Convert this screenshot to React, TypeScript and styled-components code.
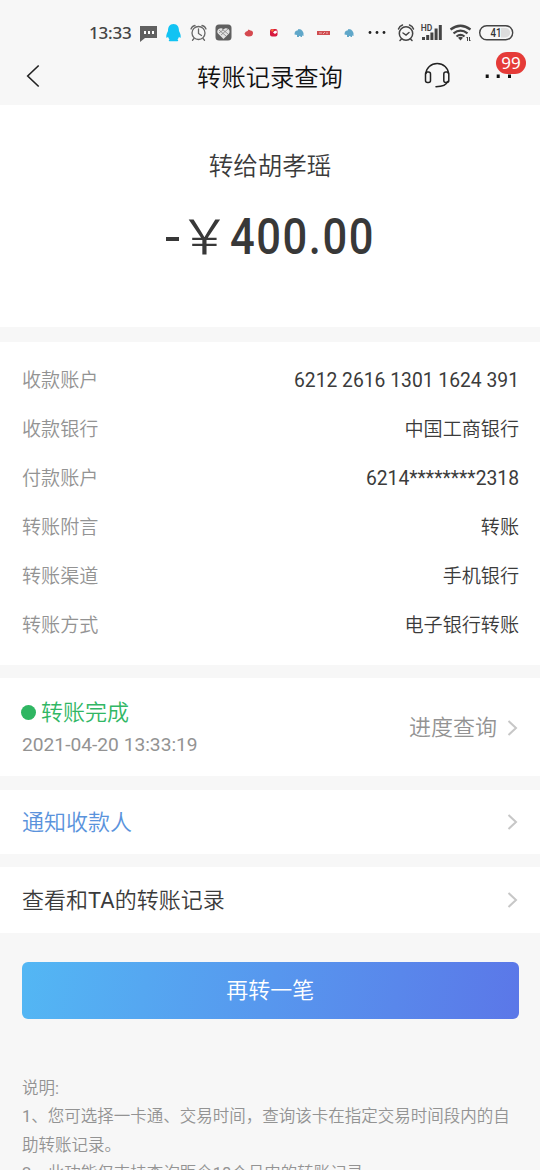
import React from "react";
import styled, { createGlobalStyle } from "styled-components";

const Global = createGlobalStyle`
  * { box-sizing: border-box; }
  html, body { margin: 0; padding: 0; background: #f7f7f7; overflow: hidden; }
  body { font-family: Roboto, "Noto Sans CJK SC DemiLight", "Noto Sans CJK SC", sans-serif; color: #3b3b3b; }
`;

const Screen = styled.div`
  width: 540px;
  height: 1170px;
  overflow: hidden;
  background: #f7f7f7;
  display: flex;
  flex-direction: column;
`;

const StatusBar = styled.div`
  flex: none;
  height: 48px;
  padding: 18px 0 0 89px;
  display: flex;
  align-items: flex-start;
  svg { display: block; flex: none; }
`;

const Clock = styled.span`
  width: 50px;
  font-size: 17px;
  line-height: 30px;
  font-weight: 500;
  letter-spacing: -0.2px;
  font-family: "Noto Sans", sans-serif;
  color: #444;
`;

const NavBar = styled.header`
  flex: none;
  height: 57px;
  display: grid;
  grid-template-columns: 120px 1fr 120px;
  align-items: start;
  svg { display: block; }
`;

const BackButton = styled.button`
  border: 0;
  background: none;
  padding: 16px 0 0 26px;
`;

const Title = styled.h1`
  margin: 0;
  padding-top: 2px;
  text-align: center;
  font-size: 24.3px;
  line-height: 55px;
  font-weight: 400;
  color: #111;
`;

const Tools = styled.div`
  position: relative;
  height: 57px;
`;

const Badge = styled.span`
  position: absolute;
  left: 76px;
  top: 4px;
  width: 30px;
  height: 22px;
  border-radius: 11px;
  background: #e53b38;
  color: #fff;
  font: 400 17px/22px "Noto Sans", sans-serif;
  text-align: center;
`;

const Panel = styled.section<{ $height: number; $gap: number }>`
  flex: none;
  height: ${(p) => p.$height}px;
  margin-bottom: ${(p) => p.$gap}px;
  background: #fff;
`;

const Summary = styled(Panel)`
  padding-top: 43px;
  display: flex;
  flex-direction: column;
  align-items: center;
`;

const Payee = styled.div`
  font-size: 24.5px;
  line-height: 38px;
`;

const Amount = styled.div`
  width: 208px;
  margin-top: 16px;
  height: 70px;
  display: flex;
  align-items: center;
  color: #383838;
`;

const Minus = styled.span`
  flex: none;
  width: 13px;
  height: 4px;
  margin: 4px 0 0;
  background: #383838;
`;

const Yen = styled.span`
  flex: none;
  width: 51px;
  height: 70px;
  font: 400 48px/62px "Noto Sans CJK SC DemiLight", "Noto Sans CJK SC", sans-serif;
  transform: scaleX(1.06);
  transform-origin: left center;
`;

const Digits = styled.span`
  flex: none;
  width: 143px;
  font: 500 50px/70px Roboto, sans-serif;
  letter-spacing: 1.8px;
  transform: scaleX(0.87);
  transform-origin: left center;
  white-space: nowrap;
`;

const Details = styled(Panel)`
  padding: 13px 21px 0 22px;
`;

const DetailRow = styled.div`
  height: 49px;
  display: flex;
  align-items: center;
  justify-content: space-between;
  font-size: 19.1px;
`;

const DetailLabel = styled.span`
  padding-bottom: 2px;
  color: #939393;
`;

const DetailValue = styled.span<{ $numeric: boolean }>`
  padding: ${(p) => (p.$numeric ? "2px 0 0" : "0 0 2px")};
  font-size: ${(p) => (p.$numeric ? 19.3 : 19.1)}px;
`;

const ActionRow = styled(Panel)<{ $color?: string }>`
  padding: 1px 22px 0;
  display: flex;
  align-items: center;
  justify-content: space-between;
  font-size: 22px;
  color: ${(p) => p.$color ?? "#3b3b3b"};
`;

const ActionText = styled.span`
  padding-bottom: 5px;
`;

const StatusBlock = styled.div`
  display: flex;
  flex-direction: column;
`;

const StatusLine = styled.div`
  display: flex;
  align-items: center;
  gap: 5px;
  margin-left: -1px;
  line-height: 34px;
  color: #31b765;
`;

const Dot = styled.i`
  width: 15px;
  height: 15px;
  border-radius: 50%;
  background: #2fb662;
`;

const Stamp = styled.time`
  font-size: 19.2px;
  line-height: 30px;
  color: #939393;
`;

const Progress = styled.span`
  display: flex;
  align-items: center;
  gap: 10px;
  color: #939393;
`;

const Submit = styled.button`
  flex: none;
  height: 57px;
  margin: 0 21px 0 21.5px;
  border: 0;
  border-radius: 6px;
  background: linear-gradient(100deg, #53b7f4, #5b77e8);
  color: #fff;
  font: 400 22px/55px Roboto, "Noto Sans CJK SC DemiLight", "Noto Sans CJK SC", sans-serif;
  padding: 0;
`;

const Notes = styled.div`
  flex: none;
  margin-top: 56px;
  padding: 0 22px;
  font-size: 16.5px;
  line-height: 28.5px;
  color: #939393;
  white-space: nowrap;
  p { margin: 0; }
`;

const Chevron = () => (
  <svg width="11" height="18" viewBox="0 0 11 18" fill="none" stroke="#c7c7c7" strokeWidth="2">
    <path d="M1.500 2 9 9l-7.500 7" />
  </svg>
);

const StatusIcons = () => (
  <svg width="390" height="30" viewBox="139 18 390 30" fill="none">
    <path d="M140 26h17v12h-12l-5 4z" fill="#606060" />
    <path d="M144 31h2v3h-2zm4 0h2v3h-2zm4 0h2v3h-2z" fill="#fff" />
    <path d="M173.500 24c-4 0-5.500 3-5.500 7-1 2-2 4-1.700 6.500.4.700 1 .2 1.700-.7.300 1.200.8 2 1.500 2.600-2 1.600.5 2.100 4 1.800 3.500.3 6-.2 4-1.800.7-.6 1.200-1.400 1.500-2.600.7.900 1.300 1.400 1.700.7.300-2.500-.7-4.500-1.700-6.500 0-4-1.500-7-5.500-7z" fill="#12c3f3" />
    <g stroke="#666" strokeWidth="1.300" strokeLinecap="round">
      <circle cx="198.500" cy="33" r="6.500" />
      <path d="M198.500 29v4.500l3 2M191 29q1-3 4-3.500m7 0q3 .5 4 3.500M194 38.500l-1.500 1.700m10.500-1.700 1.500 1.700" />
    </g>
    <rect x="215.500" y="24.500" width="16" height="16" rx="3.500" fill="#606060" />
    <path d="m223.500 39-5.500-5.500c-2.500-3.500 2.500-7.500 5.500-4 3-3.500 8 .5 5.500 4z" fill="#e4e4e4" />
    <path d="m219 30 7 6m-4-7 6 5m0-5-7 6m-2-2 4-3" stroke="#777" strokeWidth=".7" />
    <path d="M244.500 33.500q1-2.500 3-2.500l1-1.500 2 1q2.500 0 2.500 2.500 0 3.500-4.300 3.500-3.400 0-4.200-3z" fill="#d5494f" />
    <rect x="270" y="29" width="7.500" height="7.500" rx="2" fill="#d7193f" />
    <path d="m273 32.500 1.500-1.500 2-.5.500 2-2 1.500z" fill="#fff" />
    <path d="m271 30 2-1 1 1-2 2z" fill="#fa7a31" />
    <g fill="#60a7c9">
      <path d="M294.500 34.500q0-4 3-4l1-1.500q3 0 4 2 1.500 1.500 1 5l-1.500-.5v1.500h-1.500v-1h-1.500v1h-2v-2z" />
      <path d="M344.500 34.500q0-4 3-4l1-1.500q3 0 4 2 1.500 1.500 1 5l-1.500-.5v1.500h-1.500v-1h-1.500v1h-2v-2z" />
    </g>
    <rect x="317" y="31" width="13" height="4" fill="#d04d50" />
    <path d="M319 33h3m1 1 2-2m1 1h2" stroke="#f3caca" strokeWidth=".8" />
    <g fill="#222"><circle cx="370" cy="32.500" r="1.400" /><circle cx="377" cy="32.500" r="1.400" /><circle cx="384" cy="32.500" r="1.400" /></g>
    <g stroke="#444" strokeWidth="1.500" strokeLinecap="round">
      <circle cx="406" cy="33.500" r="6.700" />
      <path d="m403 33 3 2 3-2.500M398.500 29q1-3 4-4m7 0q3 1 4 4M401.500 39l-1.500 1.500m10.500-1.500 1.500 1.500" />
    </g>
    <text x="420.800" y="30.500" fill="#444" fontFamily="Roboto" fontWeight="600" fontSize="8.500">HD</text>
    <path d="M422 37h3v3h-3zm4.200-2h3v5h-3zm4.200-2.500h3V40h-3zm4.200-4h3V40h-3zm4.200-3.500h3v15h-3z" fill="#444" />
    <g stroke="#444" strokeWidth="2.200">
      <path d="M450.500 29.500q10-7.500 20 0M453.500 33.300q7-5.400 14 0M456.500 36.500q4-3.200 8 0" />
    </g>
    <path d="m460.500 40.500-2.500-2.800q2.500-2 5 0z" fill="#444" />
    <path d="M467.500 37v4m-1-3 1-1m2 0v4m1-1-1 1" stroke="#444" />
    <rect x="479.700" y="25.700" width="33" height="14" rx="7" stroke="#444" strokeWidth="1.400" />
    <path d="M501 28h4.500a4.700 4.700 0 0 1 0 9.400H501z" fill="#ddd" />
    <text x="490.500" y="37.300" fill="#333" fontFamily="Roboto" fontWeight="500" fontSize="13" textLength="11" lengthAdjust="spacingAndGlyphs">41</text>
  </svg>
);

const ToolIcons = () => (
  <svg width="120" height="57" viewBox="420 48 120 57" fill="none">
    <g stroke="#222" strokeWidth="1.500">
      <path d="M426 73.500a11.200 10 0 0 1 22.400 0M447.500 81.500q-1.500 5-11.500 5.200" strokeLinecap="round" />
      <rect x="425.500" y="72" width="5" height="10.500" rx="2" />
      <rect x="443.800" y="72" width="5" height="10.500" rx="2" />
    </g>
    <path d="M485.700 74.500h3V78h-3zm11 0h3V78h-3zm11.300 0h3V78h-3z" fill="#111" />
  </svg>
);

const details = [
  ["收款账户", "6212 2616 1301 1624 391"],
  ["收款银行", "中国工商银行"],
  ["付款账户", "6214********2318"],
  ["转账附言", "转账"],
  ["转账渠道", "手机银行"],
  ["转账方式", "电子银行转账"],
];

export default function App() {
  return (
    <Screen>
      <Global />
      <StatusBar>
        <Clock>13:33</Clock>
        <StatusIcons />
      </StatusBar>
      <NavBar>
        <BackButton aria-label="返回">
          <svg width="14" height="24" viewBox="0 0 14 24" fill="none" stroke="#222" strokeWidth="1.600">
            <path d="M12.700 1.500 1.700 12l11 10.500" />
          </svg>
        </BackButton>
        <Title>转账记录查询</Title>
        <Tools>
          <ToolIcons />
          <Badge>99</Badge>
        </Tools>
      </NavBar>
      <Summary $height={222} $gap={15}>
        <Payee>转给胡孝瑶</Payee>
        <Amount>
          <Minus />
          <Yen>￥</Yen>
          <Digits>400.00</Digits>
        </Amount>
      </Summary>
      <Details $height={322.5} $gap={13.5}>
        {details.map(([label, value]) => (
          <DetailRow key={label}>
            <DetailLabel>{label}</DetailLabel>
            <DetailValue $numeric={/^\d/.test(value)}>{value}</DetailValue>
          </DetailRow>
        ))}
      </Details>
      <ActionRow $height={98} $gap={14}>
        <StatusBlock>
          <StatusLine>
            <Dot />
            转账完成
          </StatusLine>
          <Stamp>2021-04-20 13:33:19</Stamp>
        </StatusBlock>
        <Progress>
          <ActionText>进度查询</ActionText>
          <Chevron />
        </Progress>
      </ActionRow>
      <ActionRow $height={63.5} $gap={13.5} $color="#5a93dc">
        <ActionText>通知收款人</ActionText>
        <Chevron />
      </ActionRow>
      <ActionRow $height={65.5} $gap={29}>
        <ActionText>查看和TA的转账记录</ActionText>
        <Chevron />
      </ActionRow>
      <Submit>再转一笔</Submit>
      <Notes>
        <p>说明:</p>
        <p>1、您可选择一卡通、交易时间，查询该卡在指定交易时间段内的自</p>
        <p>助转账记录。</p>
        <p>2、此功能仅支持查询距今18个月内的转账记录。</p>
      </Notes>
    </Screen>
  );
}
